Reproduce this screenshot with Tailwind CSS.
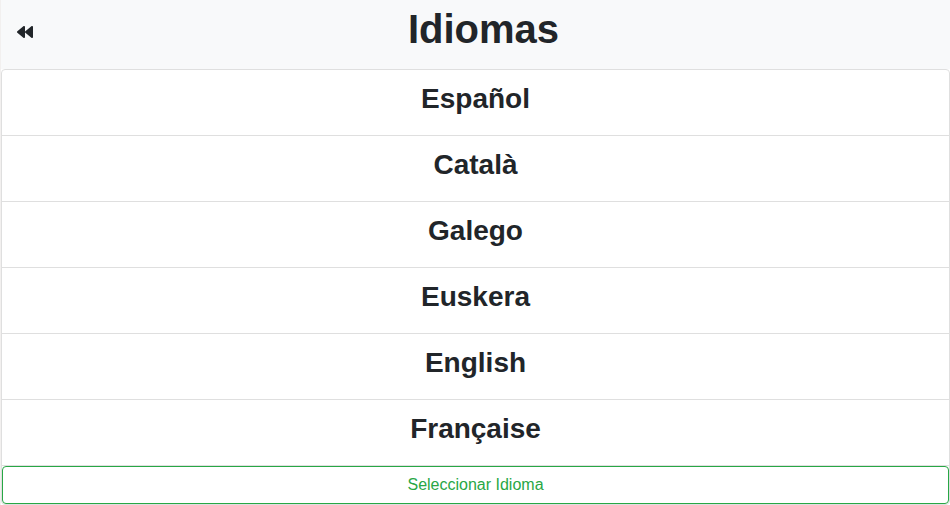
<!DOCTYPE html>
<html lang="es">
<head>
<meta charset="utf-8">
<meta name="viewport" content="width=device-width, initial-scale=1">
<title>Idiomas</title>
<script src="https://cdn.jsdelivr.net/npm/@tailwindcss/browser@4"></script>
</head>
<body class="border-l border-[#f2f0ef] bg-white font-['Liberation_Sans',Arial,sans-serif] text-[#212529]">
<header class="grid grid-cols-[48px_1fr_32px] items-start bg-[#f8f9fa] pt-[5px] pb-2.5">
  <a href="#" aria-label="Volver" class="flex h-[54px] items-center pl-4">
    <svg class="h-4 w-4" viewBox="0 0 512 512" fill="currentColor" aria-hidden="true"><path d="M11.500 280.600l192 160c20.600 17.200 52.500 2.800 52.500-24.600V96c0-27.400-31.900-41.800-52.500-24.600l-192 160c-15.300 12.800-15.300 36.400 0 49.200zm256 0l192 160c20.600 17.200 52.500 2.800 52.500-24.600V96c0-27.400-31.900-41.800-52.500-24.600l-192 160c-15.300 12.800-15.300 36.400 0 49.200z"/></svg>
  </a>
  <h1 class="text-center text-[40px] leading-12 font-bold">Idiomas</h1>
</header>
<main class="rounded border border-[#dfdfdf] bg-white">
  <ul class="text-center text-[28px] leading-[34px] font-bold">
    <li class="border-b border-[#dfdfdf] px-5 pt-3 pb-[19px]"><h3>Español</h3></li>
    <li class="border-b border-[#dfdfdf] px-5 pt-3 pb-[19px]"><h3>Català</h3></li>
    <li class="border-b border-[#dfdfdf] px-5 pt-3 pb-[19px]"><h3>Galego</h3></li>
    <li class="border-b border-[#dfdfdf] px-5 pt-3 pb-[19px]"><h3>Euskera</h3></li>
    <li class="border-b border-[#dfdfdf] px-5 pt-3 pb-[19px]"><h3>English</h3></li>
    <li class="border-b border-[#dfdfdf] px-5 pt-3 pb-[19px]"><h3>Française</h3></li>
  </ul>
  <button type="button" class="block w-full rounded border border-[#28a745] px-3 py-1.5 text-base leading-6 text-[#28a745]">Seleccionar Idioma</button>
</main>
</body>
</html>
